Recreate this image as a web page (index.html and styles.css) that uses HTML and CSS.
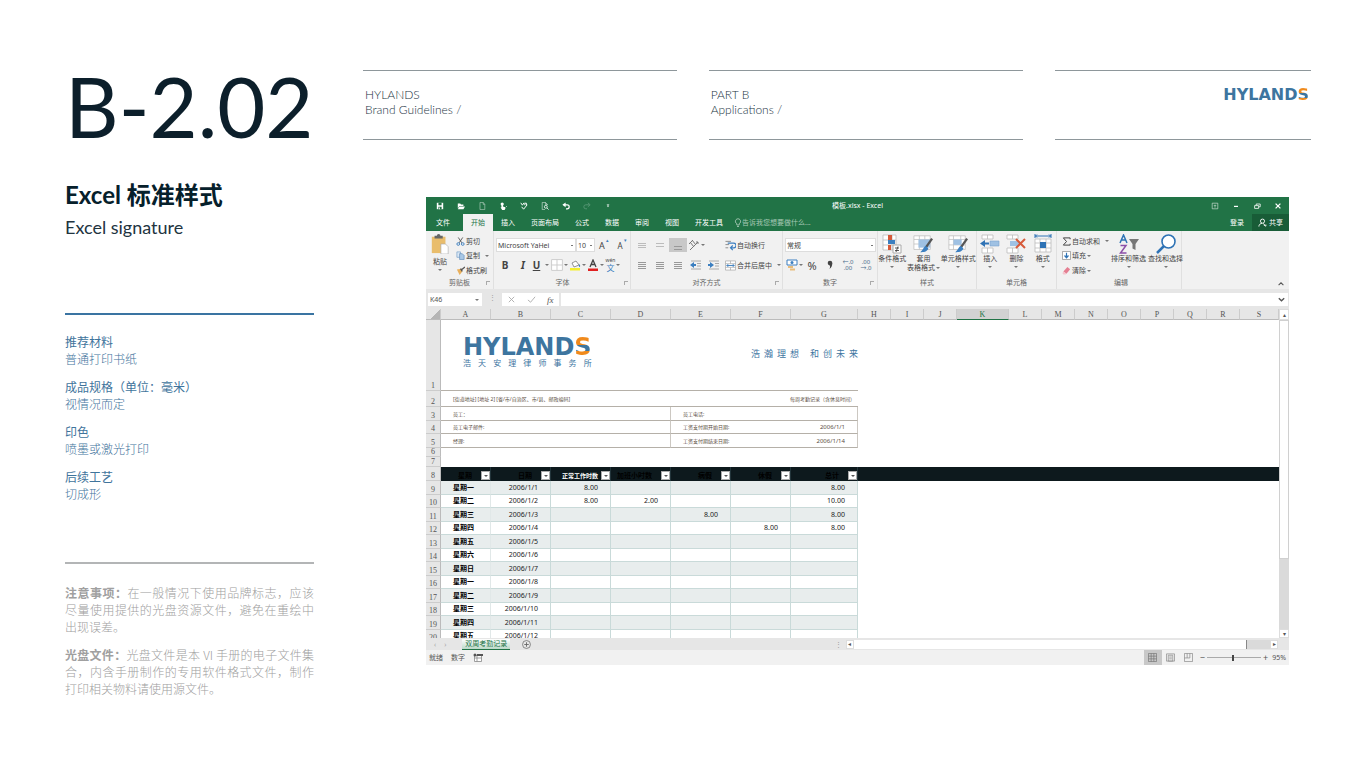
FILE: index.html
```html
<!DOCTYPE html>
<html lang="zh-CN">
<head>
<meta charset="utf-8">
<title>HYLANDS Brand Guidelines</title>
<link rel="stylesheet" href="styles.css">
</head>
<body>
<div class="page">
  <aside class="side">
    <h1 class="code">B-2.02</h1>
    <h2 class="name">Excel 标准样式</h2>
    <p class="name-en">Excel signature</p>
    <dl class="specs">
      <div><dt>推荐材料</dt><dd>普通打印书纸</dd></div>
      <div><dt>成品规格（单位：毫米）</dt><dd>视情况而定</dd></div>
      <div><dt>印色</dt><dd>喷墨或激光打印</dd></div>
      <div><dt>后续工艺</dt><dd>切成形</dd></div>
    </dl>
    <div class="notes">
      <p><b>注意事项：</b>在一般情况下使用品牌标志，应该尽量使用提供的光盘资源文件，避免在重绘中出现误差。</p>
      <p><b>光盘文件：</b>光盘文件是本 VI 手册的电子文件集合，内含手册制作的专用软件格式文件，制作打印相关物料请使用源文件。</p>
    </div>
  </aside>
  <main class="main">
    <header class="top">
      <p>HYLANDS<br>Brand Guidelines /</p>
      <p>PART B<br>Applications /</p>
      <div class="top-logo"><span class="logo">HYLAND<span class="s">S</span></span></div>
    </header>

    <section class="excel">
      <div class="titlebar">
        <div class="quick">
          <button aria-label="保存"><svg viewBox="0 0 10 10"><path d="M1 1h8v8H1z" fill="#fff"/><path d="M3 1h4v3H3zM3 6h4v3H3z" fill="#217346"/><path d="M4 7h1v2H4z" fill="#fff"/></svg></button>
          <button aria-label="打开"><svg viewBox="0 0 10 10"><path d="M1 2h3l1 1h3v2H3L1 8z" fill="#fff"/><path d="M3 5.500h7L8 9H1z" fill="#fff"/></svg></button>
          <button aria-label="新建"><svg viewBox="0 0 10 10"><path d="M2.500.5h4L8.500 3v6.500h-6zM6.500.5V3h2" fill="none" stroke="#b5d0c0" stroke-width=".8"/></svg></button>
          <button aria-label="触摸模式"><svg viewBox="0 0 10 10"><circle cx="4" cy="2.500" r="2" fill="#fff"/><path d="M3 2.500h2v3l3 1V8L7 10H4L2 7l1-.5z" fill="#fff"/><path d="M9 5h1v1H9z" fill="#fff"/></svg></button>
          <button aria-label="拼写检查"><svg viewBox="0 0 10 10"><path d="M1 1l2 3 2-3M6 4V1.500h2V4M2 6l2.500 3L9 3.500" fill="none" stroke="#fff" stroke-width="1.200"/></svg></button>
          <button aria-label="打印预览"><svg viewBox="0 0 10 10"><path d="M5 9.500H1.500v-9h4L8 3v1M5.500.5V3H8" fill="none" stroke="#d7e6dd" stroke-width=".8"/><circle cx="6" cy="6" r="1.800" fill="none" stroke="#fff"/><path d="M7.500 7.500l2 2" stroke="#fff"/></svg></button>
          <button aria-label="撤消"><svg viewBox="0 0 10 10"><path d="M2 3.500h4.500a2.500 2.500 0 010 5H5" fill="none" stroke="#fff" stroke-width="1.500"/><path d="M4.500.5v6L.5 3.500z" fill="#fff"/></svg></button>
          <button aria-label="恢复"><svg viewBox="0 0 10 10"><path d="M8 3.500H3.500a2.500 2.500 0 000 5H5M6 1l3 2.500L6 6" fill="none" stroke="#5f9c7b"/></svg></button>
          <button aria-label="自定义"><svg viewBox="0 0 10 10"><path d="M3.500 4.500h3L5 6.500zM3.500 3h3v.6h-3z" fill="#fff"/></svg></button>
        </div>
        <div class="doc">模板.xlsx - Excel</div>
        <div class="winbtns">
          <button aria-label="功能区显示选项"><svg viewBox="0 0 10 10"><path d="M1.500 1.500h7v7h-7zM5 7V4M3.500 5L5 3.500 6.500 5" fill="none" stroke="#d7e6dd" stroke-width=".8"/></svg></button>
          <button aria-label="最小化"><svg viewBox="0 0 10 10"><path d="M2.500 5.500h5" stroke="#fff" stroke-width="1.500"/></svg></button>
          <button aria-label="还原"><svg viewBox="0 0 10 10"><path d="M2 4.500h5v3.500H2zM4 4V2.500h5V6H7.500" fill="none" stroke="#fff"/></svg></button>
          <button aria-label="关闭"><svg viewBox="0 0 10 10"><path d="M2 2l6 6m0-6l-6 6" stroke="#fff" stroke-width="1.600"/></svg></button>
        </div>
      </div>
      <nav class="tabs">
        <button class="file">文件</button><button class="on">开始</button><button>插入</button><button>页面布局</button><button>公式</button><button>数据</button><button>审阅</button><button>视图</button><button>开发工具</button>
        <svg class="bulb" viewBox="0 0 8 10"><path d="M2.800 7V5.700a2.600 2.600 0 112.400 0V7zM3 8.500h2" fill="none" stroke="#b5d0c0" stroke-width=".8"/></svg>
        <input class="tell" aria-label="告诉我" placeholder="告诉我您想要做什么...">
        <button class="login">登录</button>
        <button class="share"><svg viewBox="0 0 10 10"><circle cx="5" cy="3.500" r="2.300" fill="none" stroke="#fff"/><path d="M1 9.500c0-2 1.500-3.500 3.500-3.700M6 6l2.500 3.500M6.500 8h3" fill="none" stroke="#fff"/></svg>共享</button>
      </nav>

      <div class="ribbon">
        <div class="group">
          <div class="body clip">
            <button class="big paste"><svg viewBox="0 0 20 22"><path d="M1 3h15v18H1z" fill="#e9bd6c"/><path d="M4 5V2h2.500a2 2 0 014 0H13v3z" fill="#666"/><path d="M11 11h5l3 3v8h-8z" fill="#fff" stroke="#aaa" stroke-width=".7"/></svg>粘贴<i class="dn"></i></button>
            <div class="stack">
              <button><svg viewBox="0 0 10 10"><path d="M2.500.5l4 6M7.500.5l-4 6" stroke="#555" fill="none"/><circle cx="2.500" cy="7.800" r="1.500" fill="none" stroke="#3c7fc0"/><circle cx="7.500" cy="7.800" r="1.500" fill="none" stroke="#3c7fc0"/></svg>剪切</button>
              <button><svg viewBox="0 0 10 10"><path d="M1 1h4v6H1z" fill="#dbe8f5" stroke="#7ba3cc" stroke-width=".8"/><path d="M4 3h3l2 2v4.500H4z" fill="#a9c8e6" stroke="#6b93bd" stroke-width=".8"/></svg>复制<i class="dn gap"></i></button>
              <button><svg viewBox="0 0 10 10"><path d="M1 4l5-1 1 3-3 4z" fill="#e9b05c"/><path d="M5 3l2 3M6.500 4L10 1" stroke="#555" stroke-width="1.500"/></svg>格式刷</button>
            </div>
          </div>
          <div class="cap">剪贴板<i class="launch"></i></div>
        </div>

        <div class="group">
          <div class="body rows">
            <div class="row">
              <select class="fontname" aria-label="字体"><option>Microsoft YaHei</option></select><select class="fontsize" aria-label="字号"><option>10</option></select>
              <button class="cell">A<sup>▴</sup></button><button class="cell small">A<sup>▾</sup></button>
            </div>
            <div class="row">
              <button class="cell biu"><b>B</b></button><button class="cell biu"><b><em>I</em></b></button><button class="cell biu"><b><u>U</u></b><i class="dn gap"></i></button>
              <button class="cell"><svg viewBox="0 0 10 10"><path d="M.5.5h9v9h-9zM5 .5v9M.5 5h9" fill="#fff" stroke="#ccc" stroke-width=".8"/></svg><i class="dn"></i></button>
              <button class="cell"><svg viewBox="0 0 12 12"><path d="M3 4l4-2 3 4-5 2z" fill="#fff" stroke="#777" stroke-width=".8"/><path d="M10 5c2 2 1 3 0 3z" fill="#3c7fc0"/><path d="M1 9h10v2.500H1z" fill="#f4ee2b"/></svg><i class="dn"></i></button>
              <button class="cell"><svg viewBox="0 0 12 12"><path d="M3 8l3-7 3 7M4 5.500h4" fill="none" stroke="#444" stroke-width="1.300"/><path d="M1 9.500h10V12H1z" fill="#e02020"/></svg><i class="dn"></i></button>
              <button class="cell wen"><ruby>文<rt>wén</rt></ruby><i class="dn"></i></button>
            </div>
          </div>
          <div class="cap">字体<i class="launch"></i></div>
        </div>

        <div class="group">
          <div class="body align">
            <div class="rows">
              <div class="row">
                <button class="cell"><i class="ln three light"></i></button><button class="cell"><i class="ln two light"></i></button><button class="cell pressed"><i class="ln two low"></i></button>
                <button class="cell"><svg viewBox="0 0 12 12"><path d="M2 3l4 5M4 1l4 5M1 5l4-4M2 11l8-8M8 3h2v2" fill="none" stroke="#777"/></svg><i class="dn"></i></button>
              </div>
              <div class="row">
                <button class="cell"><i class="ln three"></i></button><button class="cell"><i class="ln three"></i></button><button class="cell"><i class="ln three"></i></button>
                <button class="cell"><svg viewBox="0 0 12 12"><path d="M1 2h10M7 4.500h4M7 7h4M1 10h10" stroke="#aaa"/><path d="M6 5H4V3L0 6l4 3V7h2z" fill="#3c7fc0"/></svg></button>
                <button class="cell"><svg viewBox="0 0 12 12"><path d="M1 2h10M7 4.500h4M7 7h4M1 10h10" stroke="#aaa"/><path d="M0 5h2V3l4 3-4 3V7H0z" fill="#3c7fc0"/></svg></button>
              </div>
            </div>
            <div class="rows wraps">
              <button><svg viewBox="0 0 12 12"><path d="M.5 1.500h6M.5 5h4M.5 8.500h3" stroke="#888"/><path d="M3 3.500h6.500a1.500 1.500 0 010 5H7M8.500 6L6 8.500 8.500 11" fill="none" stroke="#3c7fc0" stroke-width="1.300"/></svg>自动换行</button>
              <button><svg viewBox="0 0 12 12"><path d="M.5 1h11v10H.5zM.5 4h11M.5 8h11M6 1v3M6 8v3" fill="#fff" stroke="#aaa" stroke-width=".8"/><path d="M2 6h8M3.500 4.500L2 6l1.500 1.500M8.500 4.500L10 6 8.500 7.500" fill="none" stroke="#3c7fc0"/></svg>合并后居中<i class="dn gap"></i></button>
            </div>
          </div>
          <div class="cap">对齐方式<i class="launch"></i></div>
        </div>

        <div class="group">
          <div class="body rows">
            <div class="row"><select class="numfmt" aria-label="数字格式"><option>常规</option></select></div>
            <div class="row spread">
              <button class="cell"><svg viewBox="0 0 12 12"><path d="M1 1h10v5H1z" fill="#fff" stroke="#3c7fc0"/><circle cx="6" cy="3.500" r="1.500" fill="#3c7fc0"/><path d="M2 7h5v2H2zM4 9.500h5v2H4z" fill="#e9bd7c"/></svg><i class="dn"></i></button>
              <button class="cell pct">%</button><button class="cell pct" aria-label="千位分隔样式"><svg viewBox="0 0 12 12"><circle cx="6" cy="4" r="2.300" fill="#444"/><path d="M8.300 4c0 3-1 5-3 6 1-1.500 1-3 0-4z" fill="#444"/></svg></button>
              <button class="cell dec">←.0<br>.00</button><button class="cell dec">.00<br>→.0</button>
            </div>
          </div>
          <div class="cap">数字<i class="launch"></i></div>
        </div>

        <div class="group">
          <div class="body bigs">
            <button class="big"><svg viewBox="0 0 20 20"><path d="M1 1h13v15H1zM1 6h13M1 11h13M10 1v15" fill="#fff" stroke="#bbb" stroke-width=".8"/><path d="M6 1h4v5H6zM6 11h3v5H6z" fill="#d65a3a"/><path d="M6 6h7v4H6z" fill="#3c7fc0"/><path d="M11 11h8v8h-8z" fill="#fff" stroke="#aaa"/><path d="M13 14h4M13 16.500h4M16 12.500l-2 5.500" stroke="#444" stroke-width=".9"/></svg>条件格式<i class="dn"></i></button>
            <button class="big"><svg viewBox="0 0 22 20"><path d="M1 1h18v15H1zM1 5h18M7 1v15M13 1v15M1 10h18" fill="#fff" stroke="#bbb" stroke-width=".8"/><path d="M6 5h13v9H6z" fill="#9fc1e3"/><path d="M21 4l-7 10" stroke="#555" stroke-width="2.500"/><path d="M14 12l3 3c-2 4-5 4-9 4 3-2 3-5 6-7z" fill="#3c7fc0"/></svg>套用<br><span class="inline">表格格式<i class="dn"></i></span></button>
            <button class="big"><svg viewBox="0 0 22 20"><path d="M1 1h18v15H1zM1 5h18M6 1v15M14 1v15M1 11h18" fill="#fff" stroke="#bbb" stroke-width=".8"/><path d="M6 5h9v6H6z" fill="#9fc1e3"/><path d="M21 4l-7 10" stroke="#555" stroke-width="2.500"/><path d="M14 12l3 3c-2 4-5 4-9 4 3-2 3-5 6-7z" fill="#3c7fc0"/></svg>单元格样式<i class="dn"></i></button>
          </div>
          <div class="cap">样式</div>
        </div>

        <div class="group">
          <div class="body bigs">
            <button class="big"><svg viewBox="0 0 20 20"><path d="M2 1h11v4H2zM7.500 1v4M2 14h11v5H2zM7.500 14v5" fill="#fff" stroke="#bbb" stroke-width=".8"/><path d="M10 7h9v5h-9z" fill="#9fc1e3" stroke="#7ba3cc" stroke-width=".6"/><path d="M9 8.500H5V6L0 9.500 5 13v-2.500h4z" fill="#2f73b5"/></svg>插入<i class="dn"></i></button>
            <button class="big"><svg viewBox="0 0 20 20"><path d="M1 1h11v4H1zM6.500 1v4M1 14h11v5H1zM6.500 14v5" fill="#fff" stroke="#bbb" stroke-width=".8"/><path d="M4 7h9v5H4z" fill="#9fc1e3"/><path d="M10 5l9 9m0-9l-9 9" stroke="#d65a3a" stroke-width="2"/></svg>删除<i class="dn"></i></button>
            <button class="big"><svg viewBox="0 0 20 20"><path d="M2 5h16v13H2zM2 9h16M2 14h16M7 5v13M13 5v13" fill="#fff" stroke="#bbb" stroke-width=".8"/><path d="M7 8h6v6H7z" fill="#2f73b5"/><path d="M2 2h16M2 0v4M18 0v4M4 .5L2.500 2 4 3.500M16 .5L17.500 2 16 3.500" fill="none" stroke="#2f73b5"/></svg>格式<i class="dn"></i></button>
          </div>
          <div class="cap">单元格</div>
        </div>

        <div class="group">
          <div class="body edit">
            <div class="stack">
              <button><svg viewBox="0 0 10 10"><path d="M9 2.500V1H1.500L5 5 1.500 9H9V7.500" fill="none" stroke="#444" stroke-width="1.100"/></svg>自动求和<i class="dn gap"></i></button>
              <button><svg viewBox="0 0 10 10"><path d="M.5.5h9v9h-9z" fill="#fff" stroke="#888" stroke-width=".8"/><path d="M5 2v5M2.800 5L5 7.500 7.200 5" fill="none" stroke="#2f73b5" stroke-width="1.300"/></svg>填充<i class="dn"></i></button>
              <button><svg viewBox="0 0 10 10"><path d="M6 1l3 2.500-4 5L1.500 6z" fill="#e57f92"/><path d="M1.500 6L5 8.500 4 9.500H1.500L.5 8z" fill="#f5c4cd"/></svg>清除<i class="dn"></i></button>
            </div>
            <button class="big"><svg viewBox="0 0 20 20"><path d="M1 9l3.500-8L8 9M2.500 6h4" fill="none" stroke="#2f73b5" stroke-width="1.500"/><path d="M1.500 11.500H7L1.500 19H7.500" fill="none" stroke="#8b4fa8" stroke-width="1.500"/><path d="M10 5h10l-3.500 5v6l-3-1.500V10z" fill="#777"/></svg>排序和筛选<i class="dn"></i></button>
            <button class="big"><svg viewBox="0 0 20 20"><circle cx="12.500" cy="7.500" r="6.500" fill="#fff" stroke="#2f73b5" stroke-width="1.600"/><path d="M8 12l-7 7" stroke="#2f73b5" stroke-width="2.500"/></svg>查找和选择<i class="dn"></i></button>
          </div>
          <div class="cap">编辑</div>
        </div>
        <button class="collapse" aria-label="折叠功能区"><svg viewBox="0 0 10 10"><path d="M2 6.500l3-3 3 3" fill="none" stroke="#555" stroke-width="1.300"/></svg></button>
      </div>

      <div class="formula">
        <div class="namebox"><input aria-label="名称框" value="K46"><i class="dn"></i></div>
        <span class="dots">⋮</span>
        <div class="fx"><button aria-label="取消"><svg viewBox="0 0 10 10"><path d="M2 2l6 6m0-6L2 8" stroke="#aaa"/></svg></button><button aria-label="输入"><svg viewBox="0 0 10 10"><path d="M1 5.500L4 8l5-6" fill="none" stroke="#aaa"/></svg></button><button class="fn">fx</button></div>
        <div class="fbar"><input aria-label="编辑栏"><svg viewBox="0 0 10 10"><path d="M2 3.500l3 3 3-3" fill="none" stroke="#555" stroke-width="1.500"/></svg></div>
      </div>

      <div class="sheet">
        <div class="grid">
          <table>
            <colgroup><col class="c-n"><col class="c-a"><col class="c-b"><col class="c-b"><col class="c-b"><col class="c-b"><col class="c-b"><col class="c-g"><col class="c-h"><col class="c-h"><col class="c-h"><col class="c-k"><col class="c-h"><col class="c-h"><col class="c-h"><col class="c-h"><col class="c-h"><col class="c-h"><col class="c-h"><col></colgroup>
            <thead><tr class="letters"><th class="corner"></th><th>A</th><th>B</th><th>C</th><th>D</th><th>E</th><th>F</th><th>G</th><th>H</th><th>I</th><th>J</th><th class="sel">K</th><th>L</th><th>M</th><th>N</th><th>O</th><th>P</th><th>Q</th><th>R</th><th>S</th></tr></thead>
            <tbody>
              <tr class="r1"><th>1</th><td colspan="7"><div class="letterhead"><div class="brand"><span class="logo large">HYLAND<span class="s">S</span></span><span class="firm">浩天安理律师事务所</span></div><span class="motto"><span>浩瀚理想</span><span>和创未来</span></span></div></td><td colspan="12"></td></tr>
              <tr class="r2 form"><th>2</th><td colspan="4" class="addr">[街道地址] [地址 2] [省/市/自治区、市/县、邮政编码]</td><td colspan="3" class="right">每周考勤记录（含休息时间）</td><td colspan="12" class="off"></td></tr>
              <tr class="r3 form"><th>3</th><td colspan="4" class="edge">员工：</td><td colspan="2">员工电话:</td><td class="edge"></td><td colspan="12" class="off"></td></tr>
              <tr class="r4 form"><th>4</th><td colspan="4" class="edge">员工电子邮件:</td><td colspan="2">工资支付期开始日期:</td><td class="edge date">2006/1/1</td><td colspan="12" class="off"></td></tr>
              <tr class="r3 form"><th>5</th><td colspan="4" class="edge">经理:</td><td colspan="2">工资支付期结束日期:</td><td class="edge date">2006/1/14</td><td colspan="12" class="off"></td></tr>
              <tr class="r6"><th>6</th><td colspan="19"></td></tr>
              <tr class="r7"><th>7</th><td colspan="19"></td></tr>
              <tr class="heads"><th>8</th><td><div>星期<button aria-label="筛选 星期"></button></div></td><td><div>日期<button aria-label="筛选 日期"></button></div></td><td class="lit"><div>正常工作时数<button aria-label="筛选 正常工作时数"></button></div></td><td><div>加班小时数<button aria-label="筛选 加班小时数"></button></div></td><td><div>病假<button aria-label="筛选 病假"></button></div></td><td><div>休假<button aria-label="筛选 休假"></button></div></td><td><div>总计<button aria-label="筛选 总计"></button></div></td><td colspan="12"></td></tr>
              <tr class="d"><th>9</th><td>星期一</td><td>2006/1/1</td><td>8.00</td><td></td><td></td><td></td><td>8.00</td></tr>
              <tr class="d"><th>10</th><td>星期二</td><td>2006/1/2</td><td>8.00</td><td>2.00</td><td></td><td></td><td>10.00</td></tr>
              <tr class="d"><th>11</th><td>星期三</td><td>2006/1/3</td><td></td><td></td><td>8.00</td><td></td><td>8.00</td></tr>
              <tr class="d"><th>12</th><td>星期四</td><td>2006/1/4</td><td></td><td></td><td></td><td>8.00</td><td>8.00</td></tr>
              <tr class="d"><th>13</th><td>星期五</td><td>2006/1/5</td><td></td><td></td><td></td><td></td><td></td></tr>
              <tr class="d"><th>14</th><td>星期六</td><td>2006/1/6</td><td></td><td></td><td></td><td></td><td></td></tr>
              <tr class="d"><th>15</th><td>星期日</td><td>2006/1/7</td><td></td><td></td><td></td><td></td><td></td></tr>
              <tr class="d"><th>16</th><td>星期一</td><td>2006/1/8</td><td></td><td></td><td></td><td></td><td></td></tr>
              <tr class="d"><th>17</th><td>星期二</td><td>2006/1/9</td><td></td><td></td><td></td><td></td><td></td></tr>
              <tr class="d"><th>18</th><td>星期三</td><td>2006/1/10</td><td></td><td></td><td></td><td></td><td></td></tr>
              <tr class="d"><th>19</th><td>星期四</td><td>2006/1/11</td><td></td><td></td><td></td><td></td><td></td></tr>
              <tr class="d"><th>20</th><td>星期五</td><td>2006/1/12</td><td></td><td></td><td></td><td></td><td></td></tr>
            </tbody>
          </table>
        </div>
        <div class="vscroll"><button aria-label="向上滚动">▴</button><div class="vthumb"></div><div class="vtrack"></div><button aria-label="向下滚动">▾</button></div>
      </div>

      <div class="sheetbar">
        <span class="nav"><button aria-label="上一张">‹</button><button aria-label="下一张">›</button></span>
        <button class="sheettab">双周考勤记录</button>
        <button class="add" aria-label="新工作表"><svg viewBox="0 0 10 10"><circle cx="5" cy="5" r="4.400" fill="none" stroke="#666" stroke-width=".8"/><path d="M5 2.500v5M2.500 5h5" stroke="#666"/></svg></button>
        <div class="hscroll"><span class="dots">⋮</span><button aria-label="向左滚动">◂</button><div class="hthumb"></div><div class="htrack"></div><button aria-label="向右滚动">▸</button></div>
      </div>

      <footer class="status">
        <span>就绪</span><span>数字</span>
        <svg class="macro" viewBox="0 0 10 10"><path d="M1.500 2.500h7v6h-7zM1.500 5h7M4 2.500v6" fill="#fff" stroke="#888" stroke-width=".8"/><path d="M4 1h6v2H4z" fill="#555"/><circle cx="2" cy="2" r="1.500" fill="#555"/></svg>
        <div class="views">
          <button class="on" aria-label="普通"><svg viewBox="0 0 10 10"><path d="M.5.5h9v9h-9zM.5 3.500h9M.5 6.500h9M3.500.5v9M6.500.5v9" fill="none" stroke="#777" stroke-width=".8"/></svg></button>
          <button aria-label="页面布局"><svg viewBox="0 0 10 10"><path d="M.5 1h9v8h-9zM2.500 2.500h5v6.500h-5zM3.500 4.500h3M3.500 6.500h3" fill="none" stroke="#888" stroke-width=".8"/></svg></button>
          <button aria-label="分页预览"><svg viewBox="0 0 10 10"><path d="M.5.5h9v9h-9zM3.500.5v5h-3M6.500.5v5h-3" fill="none" stroke="#888" stroke-width=".8"/></svg></button>
        </div>
        <div class="zoomer"><button aria-label="缩小">−</button><input class="zoom" type="range" aria-label="缩放" min="0" max="100" value="48"><button aria-label="放大">+</button></div><span class="pctv">95%</span>
      </footer>
    </section>
  </main>
</div>
</body>
</html>
```
FILE: styles.css
```css
* { box-sizing: border-box; margin: 0; padding: 0; }
body { background: #fff; color: #0c1f2b; font-family: "Noto Sans", "Noto Sans CJK SC", sans-serif; }
button, input, select { font: inherit; color: inherit; border: 0; background: none; min-width: 0; border-radius: 0; appearance: none; }
button { display: flex; align-items: center; justify-content: center; white-space: nowrap; }
svg { display: block; flex: none; }

.page { display: grid; grid-template-columns: minmax(0, 249fr) minmax(0, 948fr); column-gap: 49px; padding: 70px 55px 40px 65px; }

/* sidebar */
.code { font: 400 83px/72px "Lato", sans-serif; height: 72px; margin-bottom: 39px; white-space: nowrap; }
.name { font: 700 24px/28px "Lato", "Noto Sans CJK SC", sans-serif; color: #06202b; }
.name-en { font: 400 18px/24px "Lato", sans-serif; margin-top: 6px; color: #22343f; }
.specs { margin-top: 74px; border-top: 2px solid #3a74a2; padding-top: 18px; display: grid; gap: 11px; font-size: 12px; line-height: 17px; color: #3f749c; font-family: "Noto Sans CJK SC", sans-serif; }
.specs dd { font-weight: 300; }
.notes { margin-top: 60px; border-top: 2px solid #b3b5b6; padding-top: 20px; display: grid; gap: 11px; font: 300 12px/17px "Noto Sans CJK SC", sans-serif; color: #a0a0a0; text-align: justify; }
.notes b { font-weight: 700; }

/* page header */
.top { display: grid; grid-template-columns: 314fr 315fr 256fr; gap: 32px; font: 300 12px/15px "Lato", sans-serif; color: #22343f; }
.top > * { border-top: 1px solid #8e979b; border-bottom: 1px solid #8e979b; height: 70px; padding: 16px 2px; }
.top-logo { display: flex; justify-content: flex-end; }
.logo { font: 700 16px/16px "DejaVu Sans", sans-serif; color: #3d759f; white-space: nowrap; }
.logo .s { color: transparent; background: linear-gradient(#f08a1c 42%, #3d759f 42% 66%, #f08a1c 66%); background-clip: text; -webkit-background-clip: text; }
.logo.large { font-size: 24px; line-height: 22px; }

/* workbook window */
.excel { margin: 57px 22px 0 63px; background: #f1f1f1; color: #444; font-size: 7px; line-height: 9px; }
.titlebar { height: 17px; background: #217346; color: #fff; display: grid; grid-template-columns: 1fr auto 1fr; align-items: center; }
.quick { display: flex; gap: 13px; padding-left: 10px; }
.quick svg, .winbtns svg { width: 8px; height: 8px; }
.winbtns { display: flex; gap: 13px; justify-content: flex-end; padding-right: 7px; }
.tabs { height: 17px; background: #217346; color: #fff; display: flex; align-items: stretch; }
.tabs button { padding: 0 8px; }
.tabs .file { margin: 0 5px 0 2px; }
.tabs .on { background: #f1f1f1; color: #217346; }
.bulb { width: 8px; height: 10px; align-self: center; margin-left: 3px; }
.tell { flex: 1; color: #b5d0c0; }
.tell::placeholder { color: #a8c9b6; }
.tabs .share { background: #185c37; gap: 2px; padding: 0 6px; }
.share svg { width: 9px; height: 9px; }

.ribbon { display: grid; grid-template-columns: 68px 137px 152px 95px 99px 80px 125px 1fr; height: 58px; padding-bottom: 1px; }
.group { display: grid; grid-template-rows: 1fr 11px; border-right: 1px solid #e0e0e0; }
.cap { text-align: center; color: #666; position: relative; }
.launch { position: absolute; right: 3px; top: 3px; width: 4px; height: 4px; border-top: 1px solid #aaa; border-left: 1px solid #aaa; }
.dn { display: block; flex: none; width: 0; height: 0; border: 2px solid transparent; border-top-color: #777; border-bottom: 0; }
.dn.gap { margin-left: 4px; }
.body { display: flex; padding-top: 3px; }
.clip { padding-left: 4px; gap: 6px; }
.stack { display: flex; flex-direction: column; justify-content: space-around; align-items: flex-start; height: 44px; }
.stack button { gap: 1px; height: 14px; }
.stack svg { width: 9px; height: 9px; }
.big { flex-direction: column; justify-content: flex-start; line-height: 8px; gap: 1px; }
.big svg { width: 20px; height: 20px; }
.big.paste svg { margin-bottom: 3px; }
.big > .dn { margin-top: 2px; }
.big br { display: none; }
.big .inline { display: flex; align-items: center; gap: 1px; }
.rows { flex-direction: column; display: flex; gap: 6px; }
.body.rows, .align { padding: 7px 0 0 2px; }
.row { display: flex; height: 14px; align-items: center; }
.cell { width: 18px; height: 14px; font-size: 9px; gap: 1px; flex: none; }
.biu { font-size: 10px; }
.cell svg { width: 12px; height: 12px; }
.cell sup { font-size: 5px; line-height: 5px; align-self: flex-start; color: #3c7fc0; }
.cell.small { font-size: 8px; }
.cell.pct { font-size: 11px; }
.cell.dec { font-size: 6px; line-height: 6px; color: #4b6d8c; }
.wen ruby { font-size: 8px; line-height: 8px; color: #3c7fc0; }
.wen rt { font-size: 5px; color: #444; line-height: 5px; }
select { height: 14px; background: #fff linear-gradient(#777, #777) no-repeat right 2px center / 2px 1px; border: 1px solid #ddd; padding: 0 1px; }
.fontname { width: 80px; }
.fontsize { width: 19px; }
.numfmt { width: 91px; }
.spread { justify-content: space-between; padding-right: 2px; }
.pressed { background: #c8c8c8; }
.ln { display: block; width: 8px; height: 7px; background: repeating-linear-gradient(#999 0 1px, transparent 1px 2px); }
.ln.two { height: 4px; background: repeating-linear-gradient(#999 0 1px, transparent 1px 3px); }
.ln.low { margin-top: 5px; }
.ln.light { opacity: .6; height: 5px; }
.align { gap: 2px; }
.wraps button { height: 14px; gap: 1px; justify-content: flex-start; }
.wraps svg { width: 11px; height: 11px; }
.bigs { justify-content: space-around; }
.edit { padding-left: 5px; gap: 2px; justify-content: space-between; padding-right: 2px; }
.collapse { justify-self: end; align-self: end; padding: 0 4px 1px 0; }
.collapse svg { width: 8px; height: 8px; }

.formula { display: grid; grid-template-columns: 54px 16px 57px 1fr; gap: 2px; height: 20px; padding: 4px 1px 3px 2px; background: #e6e6e6; color: #555; }
.namebox, .fbar, .fx { background: #fff; display: flex; align-items: center; }
.namebox { padding: 0 3px 0 2px; }
.namebox input, .fbar input { flex: 1; height: 12px; }
.dots { text-align: center; color: #999; }
.fx { justify-content: space-around; }
.fx svg { width: 9px; height: 9px; }
.fn { font: italic 9px/10px "Liberation Serif", serif; }
.fbar svg { width: 9px; height: 9px; margin-right: 2px; }

/* sheet */
.sheet { display: grid; grid-template-columns: 1fr 10px; height: 329px; background: #fff; }
.grid { overflow: hidden; }
table { width: 100%; table-layout: fixed; border-spacing: 0; font-size: 7px; line-height: 8px; color: #222; }
.c-n { width: 15px; } .c-a { width: 50px; } .c-b { width: 60px; } .c-g { width: 67px; } .c-h { width: 33px; } .c-k { width: 52px; }
th { font: 400 8px/8px "Liberation Serif", serif; color: #555; background: #e6e6e6; border-right: 1px solid #bbb; vertical-align: bottom; border-bottom: 1px solid #ccc; white-space: nowrap; overflow: hidden; }
.letters th { height: 11px; border-right-color: #ccc; border-bottom-color: #bbb; }
.letters .corner { background: linear-gradient(135deg, #e6e6e6 60%, #b5b5b5 60%); }
.letters .sel { background: #d2d2d2; border-bottom-color: #217346; color: #217346; }
td { white-space: nowrap; vertical-align: middle; }
.r1 { height: 71px; }
.r1 td:nth-child(2) { border-bottom: 1px solid #b5b0a8; vertical-align: top; }
.letterhead { display: flex; justify-content: space-between; padding: 16px 0 0 22px; }
.brand { display: grid; color: #3d759f; }
.firm { font-size: 8px; line-height: 10px; text-align-last: justify; }
.motto { display: flex; gap: 11px; font-size: 9px; line-height: 12px; margin-top: 12px; color: #3d759f; }
.motto span { width: 48px; text-align-last: justify; }
.r2 { height: 16px; } .r3 { height: 14px; } .r4 { height: 13px; } .r6 { height: 9px; } .r7 { height: 10px; }
.form td { border-bottom: 1px solid #b5b0a8; font-size: 5px; padding-left: 12px; color: #5a4d42; }
.form .right { text-align: right; padding-right: 3px; }
.form td.edge { border-right: 1px solid #ccc8c2; }
.form td.date { font-size: 6px; text-align: right; padding: 0 12px 0 0; }
.form td.off { border: 0; }
.heads { height: 14px; }
.heads td { background: #0d191d; color: #000; font-weight: 700; border-right: 1px solid #22343a; }
.heads td:last-child { border: 0; }
.heads div { display: flex; align-items: flex-end; height: 12px; justify-content: flex-end; gap: 9px; }
.heads td.lit div { color: #fff; font-size: 6px; gap: 3px; }
.heads button { width: 9px; height: 9px; background: #fff; border: 1px solid #aaa; }
.heads button::before { content: ""; border: 2px solid transparent; border-top-color: #555; border-bottom: 0; }
.d { height: 13px; }
.d:nth-child(odd) { height: 14px; }
.d td { text-align: right; padding-right: 12px; border-right: 1px solid #c9dad9; border-bottom: 1px solid #c9dad9; }
.d td:nth-child(2) { text-align: left; padding: 0 0 0 12px; font-weight: 700; color: #000; border-right-color: #e1e8e8; }
.d:nth-child(odd) td { background: #e8eded; }

.vscroll { display: grid; grid-template-rows: 11px 239fr 70fr 9px; background: #dadada; }
.vscroll button, .hscroll button { background: #fff; color: #555; font-size: 6px; line-height: 6px; border: 1px solid #ddd; }
.vthumb { background: #fff; border: 1px solid #d0d0d0; }

.sheetbar { display: flex; height: 12px; background: #e6e6e6; align-items: center; }
.nav { display: flex; gap: 8px; padding: 0 16px 0 8px; color: #aaa; }
.sheettab { padding: 0 3px; height: 11px; color: #217346; background: linear-gradient(#fff, #bcd9c9); border-bottom: 1px solid #217346; }
.add { margin-left: 12px; }
.add svg { width: 9px; height: 9px; }
.hscroll { margin-left: auto; width: 53%; display: grid; grid-template-columns: 14px 8px 1fr 23px 8px; padding-right: 11px; height: 9px; }
.hthumb { background: #fff; border-right: 1px solid #888; }
.htrack { background: #dadada; }

.status { display: flex; height: 15px; align-items: center; gap: 8px; padding-left: 3px; color: #555; }
.macro { width: 10px; height: 10px; }
.views { margin-left: auto; display: flex; align-self: stretch; }
.views button { width: 18px; }
.views .on { background: #c8c8c8; }
.views svg { width: 9px; height: 9px; }
.zoomer { display: flex; align-items: center; gap: 2px; font-size: 9px; margin: 0 -4px 0 -6px; }
.zoom { width: 54px; height: 10px; background: linear-gradient(#aaa, #aaa) no-repeat center / 100% 1px; }
.zoom::-webkit-slider-thumb { appearance: none; width: 2px; height: 6px; background: #444; }
.pctv { padding-right: 3px; }
```
